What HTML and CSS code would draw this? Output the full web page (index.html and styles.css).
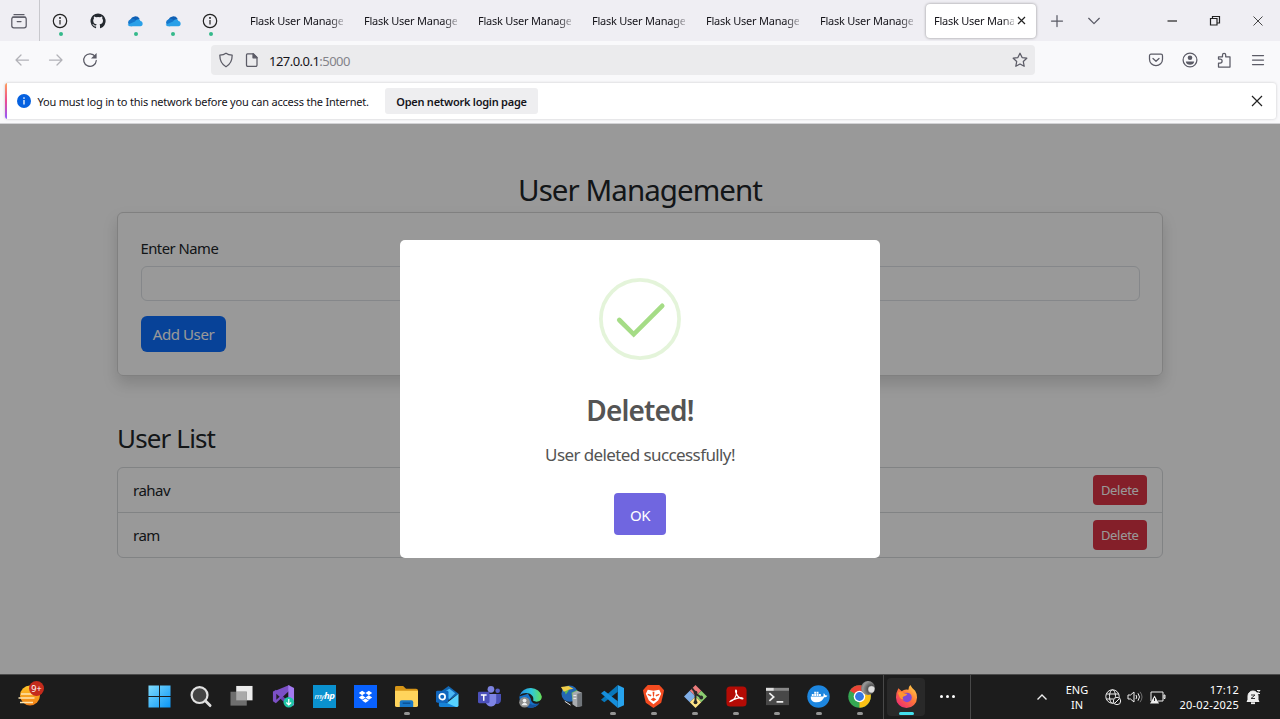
FILE: index.html
```html
<!DOCTYPE html>
<html lang="en">
<head>
<meta charset="utf-8">
<title>Flask User Management</title>
<link rel="stylesheet" href="styles.css">
</head>
<body>
<div class="screen">
  <header class="tabstrip">
    <div class="firefox-view"><svg class="i20" viewBox="0 0 20 20"><path d="M5 3.7h10M3.6 6.2h12.8" class="ln"/><rect x="2.8" y="6.2" width="14.4" height="10.6" rx="2" class="ln"/><path d="M8.2 10.6h3.8" class="ln"/></svg></div>
    <div class="pin live"><svg class="i16" viewBox="0 0 16 16"><circle cx="8" cy="8" r="6.7" class="dk"/><path d="M8 7v4.4" class="dk"/><circle cx="8" cy="4.9" r=".9"/></svg></div>
    <div class="pin"><svg class="i16" viewBox="0 0 16 16"><path fill="#24292f" d="M8 .4a7.6 7.6 0 0 0-2.4 14.8c.4.1.5-.2.5-.4v-1.4c-2.1.5-2.6-.9-2.6-.9-.3-.9-.8-1.1-.8-1.1-.7-.5.1-.5.1-.5.8.1 1.2.8 1.2.8.7 1.2 1.8.8 2.2.6.1-.5.3-.8.5-1-1.7-.2-3.5-.9-3.500-3.800 0-.8.3-1.500.8-2-.1-.2-.4-1 .1-2 0 0 .6-.2 2.100.8a7 7 0 0 1 3.800 0c1.500-1 2.100-.8 2.100-.8.4 1 .2 1.800.1 2 .5.5.8 1.200.8 2 0 2.900-1.800 3.600-3.500 3.800.3.2.5.7.5 1.400v2.100c0 .2.1.5.5.4A7.600 7.600 0 0 0 8 .4z"/></svg></div>
    <div class="pin live"><svg class="i16" viewBox="0 0 16 16"><path d="M3.500 7A5 5 0 0 1 12.600 5.800L10 10z" fill="#0f5fb4"/><path d="M4 13.200a4 3.700 0 0 1-.5-7c2-1 4-.2 5 .8l4 5z" fill="#1577cc"/><path d="M8 8.500c1.600-2.800 5-2.900 5.400-.5 3 .3 3 5.200 0 5.200H3.500c-1.400 0-2.400-.6-2.900-1.500z" fill="#2aa0e8"/></svg></div>
    <div class="pin live"><svg class="i16" viewBox="0 0 16 16"><path d="M3.500 7A5 5 0 0 1 12.600 5.800L10 10z" fill="#0f5fb4"/><path d="M4 13.200a4 3.700 0 0 1-.5-7c2-1 4-.2 5 .8l4 5z" fill="#1577cc"/><path d="M8 8.500c1.600-2.800 5-2.900 5.400-.5 3 .3 3 5.200 0 5.200H3.500c-1.400 0-2.400-.6-2.900-1.500z" fill="#2aa0e8"/></svg></div>
    <div class="pin live"><svg class="i16" viewBox="0 0 16 16"><circle cx="8" cy="8" r="6.7" class="dk"/><path d="M8 7v4.4" class="dk"/><circle cx="8" cy="4.9" r=".9"/></svg></div>
    <nav class="tabs">
      <div class="tab"><span class="tab-label">Flask User Manage</span></div>
      <div class="tab"><span class="tab-label">Flask User Manage</span></div>
      <div class="tab"><span class="tab-label">Flask User Manage</span></div>
      <div class="tab"><span class="tab-label">Flask User Manage</span></div>
      <div class="tab"><span class="tab-label">Flask User Manage</span></div>
      <div class="tab"><span class="tab-label">Flask User Manage</span></div>
      <div class="tab active"><span class="tab-label">Flask User Mana</span><svg class="tab-close" viewBox="0 0 9 9"><path d="M1 1l7 7M8 1l-7 7" class="dk"/></svg></div>
    </nav>
    <div class="tab-btn"><svg class="i16" viewBox="0 0 16 16"><path d="M8 2.500v11M2.500 8h11" class="ln"/></svg></div>
    <div class="tab-btn"><svg class="i16" viewBox="0 0 16 16"><path d="M2.700 5.300L8 10.600l5.300-5.300" class="ln"/></svg></div>
    <div class="win-btns">
      <div><svg class="i12" viewBox="0 0 12 12"><path d="M1.500 6h9.500" class="dk"/></svg></div>
      <div><svg class="i12" viewBox="0 0 12 12"><path d="M1.500 3.500h6.500v6.500H1.500zM3.500 3.500v-2H10.500v6.500H8" class="dk"/></svg></div>
      <div><svg class="i12" viewBox="0 0 12 12"><path d="M1.500 1.500l9 9M10.500 1.500l-9 9" class="th"/></svg></div>
    </div>
  </header>

  <div class="toolbar">
    <div class="nav-btns">
      <svg class="i16 faded" viewBox="0 0 16 16"><path d="M14.500 8H2M7 3L2 8l5 5" class="ln"/></svg>
      <svg class="i16 faded" viewBox="0 0 16 16"><path d="M1.500 8H14M9 3l5 5-5 5" class="ln"/></svg>
      <svg class="i16" viewBox="0 0 16 16"><path d="M13.200 4.500A6.300 6.300 0 1 0 14.300 8.500" class="ln"/><path d="M14.600 1v5.500H9z" fill="#5b5b66"/></svg>
    </div>
    <div class="urlbar">
      <svg class="i16" viewBox="0 0 16 16"><path d="M8 1.200c2 1.500 4 1.800 6.200 1.900 0 5.500-1.700 9.300-6.200 11.700C3.500 12.400 1.800 8.600 1.800 3.100 4 3 6 2.700 8 1.200z" class="ln"/></svg>
      <svg class="i16 doc" viewBox="0 0 16 16"><path d="M3.500 1.800h5.800l3.700 3.700v7.600a1.200 1.200 0 0 1-1.200 1.200H3.700a1.200 1.200 0 0 1-1.200-1.200V3a1.200 1.200 0 0 1 1-1.200z" class="ln"/><path d="M9 1.800v4h4z" fill="#5b5b66" class="ln"/></svg>
      <span class="url">127.0.0.1<span class="port">:5000</span></span>
      <svg class="i16 star" viewBox="0 0 16 16"><path d="M8 1.200l2.100 4.400 4.700.6-3.500 3.300.9 4.800L8 12l-4.200 2.300.9-4.800L1.200 6.200l4.700-.6z" class="ln"/></svg>
    </div>
    <div class="tools">
      <svg class="i16" viewBox="0 0 16 16"><path d="M3 2.200h10a1.500 1.500 0 0 1 1.500 1.500v3.500a6.500 6.500 0 0 1-13 0V3.700A1.500 1.500 0 0 1 3 2.200z" class="ln"/><path d="M5 6.500l3 2.800 3-2.800" class="ln"/></svg>
      <svg class="i16" viewBox="0 0 16 16"><circle cx="8" cy="8" r="6.900" class="ln"/><circle cx="8" cy="5.800" r="2.300" fill="#5b5b66"/><path d="M3.800 9.500h8.400c0 2-2 3.300-4.200 3.300S3.800 11.500 3.800 9.500z" fill="#5b5b66"/></svg>
      <svg class="i16" viewBox="0 0 16 16"><path d="M2.500 15V11h1.600a2 2 0 0 0 0-4H2.500V4.800h4V3a1.500 1.500 0 0 1 3.200 0v1.800H14V15z" class="ln"/></svg>
      <svg class="i16" viewBox="0 0 16 16"><path d="M2.500 3.500h11M2.500 8h11M2.500 12.500h11" class="ln"/></svg>
    </div>
  </div>

  <div class="notice-area">
    <div class="notice">
      <svg class="i14" viewBox="0 0 14 14"><circle cx="7" cy="7" r="7" fill="#0561e0"/><path d="M7 6v4.500" stroke="#fff" stroke-width="1.300"/><circle cx="7" cy="4" r=".85" fill="#fff"/></svg>
      <span class="notice-text">You must log in to this network before you can access the Internet.</span>
      <button class="notice-btn"><span>Open network login page</span></button>
      <svg class="i12 notice-close" viewBox="0 0 12 12"><path d="M1 1l10 10M11 1L1 11" class="dk"/></svg>
    </div>
  </div>

  <main class="page">
    <div class="container">
      <h2 class="title"><span>User Management</span></h2>
      <form class="card">
        <label class="label" for="name">Enter Name</label>
        <input class="input" id="name" type="text">
        <button class="add" type="button">Add User</button>
      </form>
      <h3 class="subtitle">User List</h3>
      <ul class="list">
        <li class="row"><span>rahav</span><button class="delete">Delete</button></li>
        <li class="row"><span>ram</span><button class="delete">Delete</button></li>
      </ul>
    </div>
    <div class="overlay">
      <section class="modal">
        <svg class="success" viewBox="0 0 82 82"><circle cx="41" cy="41" r="39.100" class="ring"/><path d="M20.300 42l14.400 14.300 28.500-28.500" class="tick"/></svg>
        <h2 class="modal-title">Deleted!</h2>
        <p class="modal-text">User deleted successfully!</p>
        <button class="ok">OK</button>
      </section>
    </div>
  </main>

  <footer class="taskbar">
    <div class="widget">
      <svg class="i28" viewBox="0 0 28 28"><defs><linearGradient id="sun" x2="0" y2="1"><stop stop-color="#ffc629"/><stop offset="1" stop-color="#f07d16"/></linearGradient></defs><circle cx="13" cy="15.500" r="10" fill="url(#sun)"/><path d="M4 14h15M1.500 18h16M3 22.500h13" stroke="#ffe6b0" stroke-width="1.500"/></svg>
      <span class="badge">9+</span>
    </div>
    <div class="apps">
      <div class="app"><svg viewBox="0 0 24 24"><defs><linearGradient id="win" x2="1" y2="1"><stop stop-color="#7fdcff"/><stop offset="1" stop-color="#0a95f5"/></linearGradient></defs><path fill="url(#win)" d="M.5.500h11v11H.5zM12.500.500h11v11h-11zM.5 12.500h11v11H.5zM12.500 12.500h11v11h-11z"/></svg></div>
      <div class="app"><svg viewBox="0 0 24 24"><circle cx="11" cy="10.500" r="8.300" fill="#444" stroke="#e2e2e2" stroke-width="2.300"/><path d="M17 16.500l5 5" stroke="#ddd" stroke-width="3" stroke-linecap="round"/></svg></div>
      <div class="app"><svg viewBox="0 0 24 24"><rect x="6.500" y="1" width="17" height="15" fill="#ececec"/><rect x=".5" y="7" width="17" height="14.500" fill="#6e6e6e"/><path d="M6.500 7h11v9h-11z" fill="#aaa"/></svg></div>
      <div class="app"><svg viewBox="0 0 24 24"><path d="M1 7l3-2 14 13 0 5z" fill="#6a42b0"/><path d="M1 7v10l3 2L18 6V0z" fill="#7c50c6"/><path d="M4.500 9v6.500l3.500-3.200z" fill="#24202a"/><path d="M17 0l6 3v18l-6 2z" fill="#a37af0"/><circle cx="17.500" cy="18" r="5.500" fill="#20c5a6"/><path d="M17.500 14.500v6M15 18.300l2.500 2.500 2.500-2.500" fill="none" stroke="#fff" stroke-width="1.300"/></svg></div>
      <div class="app"><svg viewBox="0 0 24 24"><path d="M0 0h24v24H0z" fill="#0a91cf"/><text x="12" y="15" class="hp">my<tspan class="hpb">hp</tspan></text></svg></div>
      <div class="app"><svg viewBox="0 0 24 24"><path d="M0 0h24v24H0z" fill="#0861fe"/><path d="M8.500 6l3.500 2.300-3.500 2.300L5 8.300zM15.500 6L19 8.300l-3.500 2.300L12 8.300zM8.500 10.700L12 13l-3.500 2.300L5 13zM15.500 10.700L19 13l-3.500 2.300L12 13zM12 14l3.500 2.200L12 18.500l-3.500-2.300z" fill="#fff"/></svg></div>
      <div class="app run"><svg viewBox="0 0 24 24"><path d="M0 2.500Q0 1 1.500 1h7l3 3H22q2 0 2 2v7H0z" fill="#d69517"/><path d="M0 6h24v15q0 2-2 2H2q-2 0-2-2z" fill="#ffd45c"/><path d="M5 23v-5q0-2 2-2h10q2 0 2 2v5z" fill="#1878c8"/><path d="M8 19h8" stroke="#0b5194" stroke-width="1.500"/></svg></div>
      <div class="app"><svg viewBox="0 0 24 24"><path d="M2 9L13 1l10.500 8-10 7z" fill="#1266b3"/><path d="M7 8l7-4 6 4.500-6 6-7-3z" fill="#4bb8f5"/><path d="M23.500 9v12q0 2-2 2H6z" fill="#57d2ff"/><path d="M3 15l18 8H5q-2 0-2-2z" fill="#1683d8"/><rect x="0" y="6" width="13" height="12.500" rx="1.500" fill="#1166bd"/><circle cx="6.500" cy="12.200" r="3" fill="none" stroke="#fff" stroke-width="1.800"/></svg></div>
      <div class="app"><svg viewBox="0 0 24 24"><circle cx="13.500" cy="4.500" r="3.500" fill="#7d83e0"/><circle cx="20.500" cy="6" r="2.400" fill="#555cc0"/><path d="M17 9.500h7v6a4 4 0 0 1-7 3z" fill="#4950b5"/><path d="M8 9.500h11v7a5.500 5.500 0 0 1-11 1z" fill="#7e84e5"/><rect x="0" y="7" width="12" height="12" rx="1.200" fill="#4b50ba"/><path d="M3 10.500h6M6 10.500v6" stroke="#fff" stroke-width="1.500"/></svg></div>
      <div class="app"><svg viewBox="0 0 24 24"><defs><linearGradient id="edge" x2="1"><stop stop-color="#238de5"/><stop offset=".55" stop-color="#30c8d8"/><stop offset="1" stop-color="#67df56"/></linearGradient></defs><path d="M.3 12a11.700 11.700 0 0 0 21 7c-5 2-9-1-9-5l-3-5z" fill="#1672c8"/><path d="M.5 11a12 11 0 0 1 23.300 1c0 5-5 6.500-9 4.500 2-7-8-11-14.300-5.500z" fill="url(#edge)"/><path d="M9 13c-1 8 7 9 12 6-3 4-8 6-13 4-5-3-4-8 1-10z" fill="#1453a0"/><circle cx="5.800" cy="18" r="5.600" fill="#8d8d8d"/><circle cx="5.800" cy="16.300" r="2" fill="#eee"/><path d="M2.500 21q3.300-5 6.600 0z" fill="#eee"/></svg></div>
      <div class="app"><svg viewBox="0 0 24 24"><circle cx="10" cy="9" r="8.500" fill="#2367b4"/><path d="M4 4q5-3 5 2l-3 4zM12 8l6-3v6l-5 5z" fill="#62b955"/><path d="M1 2l8-1 5 3-5 1-5 2z" fill="#f1ce48"/><path d="M13 8l5-2 5 2v14l-6 1-4-3z" fill="#a9acb0"/><path d="M18 9l5-1v14l-5 1z" fill="#70757a"/><path d="M14 11h3M14 14h3M5 17l6 4" stroke="#eee"/></svg></div>
      <div class="app run"><svg viewBox="0 0 24 24"><path d="M17.500 0L24 3v18l-6.500 3z" fill="#27a3ed"/><path d="M17.500 0v7L3.500 18 0 15.500z" fill="#0877ba"/><path d="M17.500 24v-7L3.500 6 0 8.500z" fill="#168fdc"/></svg></div>
      <div class="app run"><svg viewBox="0 0 24 24"><path d="M6 0h12l2.500 2.500 2.500 3-1 5-2 8L12 24 4 18.500l-2-8-1-5 2.500-3z" fill="#f34b20"/><path d="M6 5l6 1 6-1 2 4-3 7-5 4-5-4-3-7z" fill="#fff"/><path d="M6 9l4 1.500L9 12 6 10.500zM18 9l-4 1.500 1 1.500 3-1.500zM9 15l3-2 3 2-3 2zM11 7h2l-.5 5h-1z" fill="#f34b20"/></svg></div>
      <div class="app run"><svg viewBox="0 0 24 24"><path d="M12 0l6 6-6 6-6-6z" fill="#ec7c7c"/><path d="M6 6l6 6-6 6-6-6z" fill="#80afe8"/><path d="M18 6l6 6-6 6-6-6z" fill="#8bcc70"/><path d="M12 12l6 6-6 6-6-6z" fill="#ffe486"/><path d="M8 3l4 5v10M12 9l6 4" fill="none" stroke="#2a2a2a" stroke-width="2"/><g fill="#2a2a2a"><circle cx="12" cy="8" r="2"/><circle cx="12" cy="18" r="2"/><circle cx="18" cy="13" r="2"/></g></svg></div>
      <div class="app run"><svg viewBox="0 0 24 24"><rect x="1.500" y="1.500" width="21" height="21" rx="4" fill="#b40b05"/><path d="M5.500 17c3-.5 7-4 6.500-10.500-.3-2.500-2-1 0 3 2 3.500 4 5 6.500 5 1-1.500-2-1.500-6-.5-3 .8-6 1.500-7 3z" fill="none" stroke="#fff" stroke-width="1.300"/></svg></div>
      <div class="app run"><svg viewBox="0 0 24 24"><path d="M0 3h24v18H0z" fill="#484848"/><path d="M0 3h24v3H0z" fill="#888"/><path d="M0 3h8v3H0z" fill="#ddd"/><path d="M3.500 8.500l4.500 4-4.500 4M11 17.500h7" fill="none" stroke="#eee" stroke-width="1.800"/></svg></div>
      <div class="app run"><svg viewBox="0 0 24 24"><circle cx="12" cy="12" r="11.700" fill="#1d86df"/><path d="M4 12h13c.5-1.500 0-2.500.5-3.500 1 .5 1.300 1.300 1.500 2.200 1-.2 1.500 0 2.300.4-.7 1.400-1.800 1.700-3.300 1.700C16.500 16 14 18 10 18c-4 0-6.500-2-6-6zM5 9.500h2v2H5zM7.500 9.500h2v2h-2zM10 9.500h2v2h-2zM12.500 9.500h2v2h-2zM7.500 7h2v2h-2zM10 7h2v2h-2z" fill="#fff"/></svg></div>
      <div class="app run"><svg viewBox="0 0 24 24"><circle cx="12" cy="12" r="11.700" fill="#35a853"/><path d="M12 12L1.900 6A11.700 11.700 0 0 1 22.100 6z" fill="#ea4335"/><path d="M12 12l10.100-6A11.700 11.700 0 0 1 12 23.700z" fill="#fbc116"/><circle cx="12" cy="12" r="6" fill="#fff"/><circle cx="12" cy="12" r="4.600" fill="#3477e2"/></svg><i class="profile"></i></div>
    </div>
    <div class="current"><div class="app selected"><svg viewBox="0 0 24 24"><defs><linearGradient id="fox" x1="1" x2=".2" y2="1"><stop stop-color="#ffe04b"/><stop offset=".5" stop-color="#ff7838"/><stop offset="1" stop-color="#ee2974"/></linearGradient></defs><path d="M3.500 3.500l3.500 3Q10 4 14 5q0-3 2-5 2 4 5 6 2 3 2 7a11 11 0 0 1-22 0q0-5 2.500-9.500z" fill="url(#fox)"/><circle cx="12.500" cy="13" r="5" fill="#8149d4"/><path d="M3 8q4-2 6 .5l4 1q-1 2-4 2.500-2 1 0 3-3 0-4-2z" fill="#ff9730"/></svg></div>
      <div class="more"><i></i><i></i><i></i></div>
    </div>
    <div class="tray">
      <svg class="tray-up" viewBox="0 0 12 12"><path d="M1.500 8.500L6 4l4.500 4.500"/></svg>
      <div class="lang"><span>ENG</span><span>IN</span></div>
      <svg class="tray-net" viewBox="0 0 16 16"><circle cx="7.500" cy="7.500" r="6.700"/><ellipse cx="7.500" cy="7.500" rx="3" ry="6.700"/><path d="M1.500 5h12M1.500 10h7"/><circle cx="12" cy="12" r="3.700" fill="#1c1c1c"/><path d="M9.500 14.500l5-5"/></svg>
      <svg class="tray-vol" viewBox="0 0 16 16"><path d="M1 6h2.500L7 3v10l-3.500-3H1zM9 6q1.500 2 0 4M11 4.300q3 3.700 0 7.400"/><path d="M13 2.800q4 5.200 0 10.400" opacity=".4"/></svg>
      <svg class="tray-bat" viewBox="0 0 16 16"><path d="M1 12V3h12v9H8M14 6v3.500h1V6z"/><path d="M4.500 6.500L9 14.500H0z" fill="#eee" stroke="none"/><path d="M4.500 9v3" stroke="#222"/></svg>
      <div class="clock"><span class="time">17:12</span><span class="date">20-02-2025</span></div>
      <svg class="tray-bell" viewBox="0 0 16 16"><path d="M2 11V7a5 5 0 0 1 10 0v4l1 1.500H1z" fill="#eee"/><path d="M5 14.200h4" stroke-width="1.800"/><path d="M5 6h4L5 9.500h4" stroke="#333"/><path d="M11 1.500h3l-3 3h3"/></svg>
    </div>
  </footer>
</div>
</body>
</html>
```

FILE: styles.css
```css
* { box-sizing: border-box; }
body { margin: 0; font-family: "Noto Sans", "Open Sans", sans-serif; overflow: hidden; }
button { border: 0; font-family: inherit; padding: 0; }
h2, h3, p, ul { margin: 0; padding: 0; font-weight: 400; }
svg { display: block; flex: none; overflow: visible; }
.screen { width: 1280px; height: 719px; display: flex; flex-direction: column; }
.i20 { width: 20px; height: 20px; }
.i16 { width: 16px; height: 16px; }
.i14 { width: 14px; height: 14px; }
.i12 { width: 12px; height: 12px; }
.i28 { width: 28px; height: 28px; }
.ln { fill: none; stroke: #5b5b66; stroke-width: 1.25; stroke-linejoin: round; stroke-linecap: round; }
path[fill].ln { fill: #5b5b66; }
.dk { fill: none; stroke: #222; stroke-width: 1.2; }
.th { fill: none; stroke: #333; stroke-width: 0.9; }
.faded { opacity: 0.45; }

/* Tab strip */
.tabstrip { height: 41px; flex: none; background: #efeef3; display: flex; align-items: center; }
.firefox-view { width: 40px; height: 41px; border-right: 1px solid #c8c8cd; display: flex; align-items: center; justify-content: center; padding-right: 1px; }
.firefox-view + .pin { margin-left: 1.5px; }
.pin { width: 37.5px; height: 41px; position: relative; display: flex; align-items: center; justify-content: center; }
.pin.live::after { content: ""; position: absolute; left: 17px; top: 32px; width: 4px; height: 4px; border-radius: 50%; background: #35b98b; }
.tabs { display: flex; height: 41px; margin-left: 11px; align-items: center; }
.tab { width: 110px; height: 34px; margin: 0 2px; padding: 0 8px; display: flex; align-items: center; border-radius: 4px; }
.tab-label { width: 93px; overflow: hidden; white-space: nowrap; font-size: 11px; letter-spacing: -0.24px; color: #15141a; -webkit-mask-image: linear-gradient(90deg, #000 86%, transparent 105%); }
.tab.active { background: #fff; box-shadow: 0 0 3px rgba(0, 0, 0, 0.4); }
.tab.active .tab-label { width: 80px; flex: none; }
.tab-close { width: 9px; height: 9px; margin-left: 3px; }
.tab-btn { width: 37.5px; display: flex; justify-content: center; }
.win-btns { display: flex; margin-left: auto; margin-right: 0.8px; }
.win-btns div { width: 43px; display: flex; justify-content: center; }

/* Navigation toolbar */
.toolbar { height: 42px; flex: none; background: #f9f9fb; display: flex; align-items: center; padding: 0 14px; }
.nav-btns { display: flex; gap: 18px; width: 197px; padding-bottom: 4px; }
.urlbar { width: 824px; height: 30px; margin-bottom: 4px; background: #ebebed; border-radius: 4px; display: flex; align-items: center; padding: 0 7px; }
.doc { margin-left: 10px; }
.url { margin-left: 9px; font-size: 13px; line-height: 18px; padding-top: 1px; letter-spacing: -0.53px; color: #15141a; }
.port { color: #83838a; }
.star { margin-left: auto; }
.tools { display: flex; gap: 17.8px; margin-left: auto; margin-right: 0.5px; padding-bottom: 4px; }

/* Network notice */
.notice-area { height: 41px; flex: none; background: #f9f9fb; padding: 0 4px 0 5px; border-bottom: 1px solid #d2d2d5; }
.notice { height: 36px; background: linear-gradient(#ff9f5b, #ec4b92 50%, #9059ff) left / 2px 100% no-repeat #fff; border-radius: 3px; box-shadow: 0 0 3px rgba(0, 0, 0, 0.2); display: flex; align-items: center; padding: 0 13px 0 12px; }
.notice-text { margin-left: 6.5px; width: 347.5px; white-space: nowrap; font-size: 11px; letter-spacing: -0.2px; color: #15141a; }
.notice-btn { width: 153px; height: 26px; background: #eeeef0; border-radius: 3px; font-size: 11px; font-weight: 600; letter-spacing: -0.25px; color: #15141a; }
.notice-close { margin-left: auto; }

/* Page */
.page { height: 550px; flex: none; position: relative; background: #fff; color: #212529; font-size: 15px; }
.container { margin: 0 117px; padding-top: 46px; }
.title { height: 42px; font-size: 29.5px; line-height: 39px; text-align: center; letter-spacing: -0.95px; }
.card { height: 163.5px; border: 1px solid #d5d5d5; border-radius: 6px; padding: 23px 22.5px; box-shadow: 0 8px 15px rgba(0, 0, 0, 0.15); display: flex; flex-direction: column; align-items: flex-start; }
.label { height: 30px; line-height: 24px; font-size: 14.8px; letter-spacing: -0.5px; }
.input { width: 100%; height: 36px; border: 1px solid #dee2e6; border-radius: 6px; background: #fff; }
.add { width: 85px; height: 36px; margin-top: 14.5px; padding: 1px 0 0 1px; border-radius: 6px; background: #0d6efd; color: #fff; font-size: 15px; letter-spacing: -0.4px; }
.subtitle { margin-top: 45.500px; height: 46px; font-size: 26px; line-height: 35px; letter-spacing: -0.85px; }
.list { list-style: none; border: 1px solid #d8dadd; border-radius: 6px; }
.row { height: 44px; display: flex; align-items: center; justify-content: space-between; padding: 0 15px; letter-spacing: -0.5px; }
.row + .row { height: 45px; border-top: 1px solid #d8dadd; }
.delete { width: 54.5px; height: 29.5px; border-radius: 4px; background: #dc3545; color: #fff; font-size: 13px; letter-spacing: -0.3px; }
.overlay { position: absolute; inset: 0; background: rgba(0, 0, 0, 0.4); display: flex; align-items: center; justify-content: center; }
.modal { width: 480px; height: 318px; background: #fff; border-radius: 5px; display: flex; flex-direction: column; align-items: center; padding-top: 38px; color: #545454; }
.success { width: 82px; height: 82px; }
.ring { fill: none; stroke: rgba(165, 220, 134, 0.3); stroke-width: 3.75; }
.tick { fill: none; stroke: #a5dc86; stroke-width: 4.7; stroke-linecap: round; }
.modal-title { margin-top: 30px; font-size: 28px; line-height: 40px; font-weight: 600; letter-spacing: -0.85px; }
.modal-text { margin-top: 12px; font-size: 17px; line-height: 26px; letter-spacing: -0.6px; }
.ok { width: 52.5px; height: 42px; margin-top: 25px; padding-top: 1px; border-radius: 4px; background: #7066e0; color: #fff; font-size: 15px; letter-spacing: -0.5px; }

/* Taskbar */
.taskbar { height: 45px; flex: none; background: #1c1c1c; border-top: 1px solid #4b4b4b; display: flex; color: #fff; }
.widget { width: 139px; padding: 5px 0 0 17px; position: relative; }
.badge { position: absolute; left: 29px; top: 6px; width: 15px; height: 15px; border-radius: 50%; background: #c42b1c; font-size: 9px; line-height: 15px; text-align: center; }
.apps { display: flex; width: 744px; }
.app { width: 41.2px; flex: none; padding-top: 10px; position: relative; display: flex; flex-direction: column; align-items: center; }
.app svg { width: 23px; height: 23px; }
.run::after { content: ""; width: 6px; height: 3px; margin-top: 4px; border-radius: 2px; background: #949494; }
.hp { fill: #fff; font-size: 8px; font-style: italic; text-anchor: middle; letter-spacing: -0.5px; }
.hpb { font-weight: 700; font-size: 10px; }
.profile { position: absolute; left: 22px; top: 6px; width: 14px; height: 14px; border-radius: 50%; background: radial-gradient(circle at 75% 60%, #ddd 20%, #555 30%, #999 65%, #444); }
.current { width: 88px; border-left: 1px solid #484848; border-right: 1px solid #484848; display: flex; padding: 3px 0 0 3px; }
.selected { width: 38px; height: 38px; padding-top: 7px; background: #292929; border-radius: 4px; }
.selected::after { content: ""; width: 15px; height: 3px; margin-top: 4px; border-radius: 2px; background: #43e0ee; }
.more { display: flex; gap: 3px; width: 44px; height: 37px; align-items: center; justify-content: center; }
.more i { width: 3px; height: 3px; border-radius: 50%; background: #fff; }
.tray { flex: 1; display: flex; align-items: center; font-size: 11px; line-height: 15px; padding-bottom: 1px; }
.tray svg { fill: none; stroke: #eee; stroke-width: 1; }
.tray-up { width: 12px; height: 12px; margin-left: 65px; }
.tray .tray-up { stroke-width: 1.4; }
.lang { width: 40px; margin-left: 9px; display: flex; flex-direction: column; align-items: center; letter-spacing: 0; }
.tray-net { width: 16px; height: 16px; margin-left: 8px; }
.tray-vol { width: 16px; height: 16px; margin-left: 6px; }
.tray-bat { width: 16px; height: 16px; margin-left: 7px; }
.clock { width: 66px; margin-left: 7px; display: flex; flex-direction: column; align-items: flex-end; letter-spacing: 0.22px; }
.tray-bell { width: 16px; height: 16px; margin-left: 7px; }
```
